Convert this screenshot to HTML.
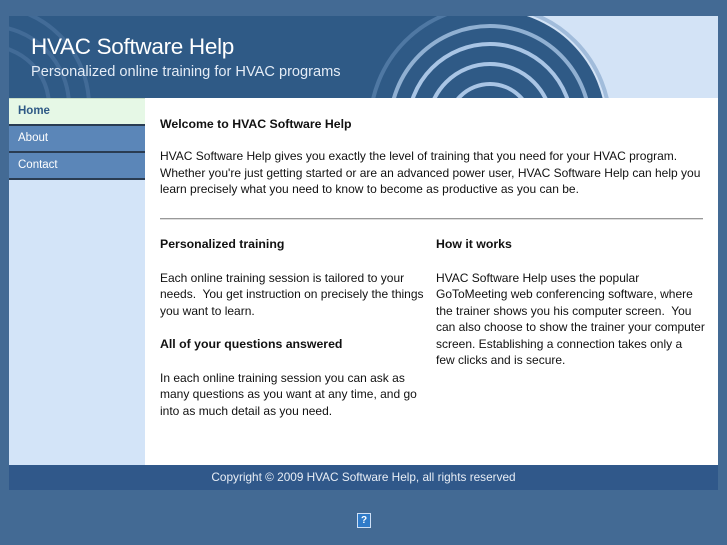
<!DOCTYPE html><html><head><style>
body{margin:0;width:727px;height:545px;background:#436a94;font-family:"Liberation Sans",sans-serif;position:relative;overflow:hidden}
#wrap{position:absolute;left:9px;top:16px;width:709px}
#hdr{position:relative;height:82px;background:#2f5a86;overflow:hidden}
#hdr h1{position:absolute;left:22px;top:18px;margin:0;font-weight:normal;font-size:22.5px;color:#fff;letter-spacing:-0.3px}
#hdr p{position:absolute;left:22px;top:48px;margin:0;font-size:14.6px;color:#e4ecf6}
#body{position:relative;height:367px;background:#fff}
#side{position:absolute;left:0;top:0;width:136px;height:367px;background:#d3e4f8}
.nav{height:25px;line-height:25px;padding-left:9px;font-size:11.5px;color:#fff;background:#5b86b8;border-bottom:2px solid #2a3c52}
.nav.on{background:#e6f8e6;color:#2f5a86;font-weight:bold;border-top:1px solid #c8ddc8}
#main{position:absolute;left:151px;top:1px;width:545px;font-size:12px;color:#111;line-height:16.5px;white-space:nowrap}
h3{font-size:12.3px;margin:0}
#foot{height:25px;line-height:25px;background:#30588a;color:#e8eef6;text-align:center;font-size:11.8px}
</style></head><body>
<div id="wrap">
<div id="hdr">
<svg width="709" height="82" style="position:absolute;left:0;top:0">
<rect x="0" y="0" width="709" height="82" fill="#d3e3f6"/>
<rect x="0" y="0" width="480" height="82" fill="#2f5a86"/>
<circle cx="481" cy="110" r="116" fill="#2f5a86"/>
<g fill="none" stroke="#a9c5e5" stroke-width="4">
<circle cx="481" cy="110" r="100" opacity="0.8"/><circle cx="481" cy="110" r="82"/><circle cx="481" cy="110" r="62"/><circle cx="481" cy="110" r="42"/></g>
<circle cx="481" cy="110" r="120" fill="none" stroke="#6f95c0" stroke-width="4" opacity="0.5"/>
<g fill="none" stroke="#4f77a3" stroke-width="4" opacity="0.6"><circle cx="-20" cy="90" r="60"/><circle cx="-20" cy="90" r="80"/><circle cx="-20" cy="90" r="100"/></g>
</svg>
<h1>HVAC Software Help</h1>
<p>Personalized online training for HVAC programs</p>
</div>
<div id="body">
<div id="side">
<div class="nav on">Home</div>
<div class="nav">About</div>
<div class="nav">Contact</div>
</div>
<div id="main">
<h3 style="position:absolute;top:17px">Welcome to HVAC Software Help</h3>
<div style="position:absolute;top:49px;width:545px">HVAC Software Help gives you exactly the level of training that you need for your HVAC program.<br>Whether you're just getting started or are an advanced power user, HVAC Software Help can help you<br>learn precisely what you need to know to become as productive as you can be.</div>
<div style="position:absolute;top:119px;width:543px;height:1px;background:#999;border-bottom:1px solid #ddd"></div>
<div style="position:absolute;top:137px;width:272px">
<h3>Personalized training</h3><div style="margin-top:17px">Each online training session is tailored to your<br>needs.&nbsp; You get instruction on precisely the things<br>you want to learn.</div>
<h3 style="margin-top:17px">All of your questions answered</h3><div style="margin-top:17px">In each online training session you can ask as<br>many questions as you want at any time, and go<br>into as much detail as you need.</div>
</div>
<div style="position:absolute;top:137px;left:276px;width:270px">
<h3>How it works</h3><div style="margin-top:17px">HVAC Software Help uses the popular<br>GoToMeeting web conferencing software, where<br>the trainer shows you his computer screen.&nbsp; You<br>can also choose to show the trainer your computer<br>screen. Establishing a connection takes only a<br>few clicks and is secure.</div>
</div>
</div>
</div>
<div id="foot">Copyright © 2009 HVAC Software Help, all rights reserved</div>
</div>
<div style="position:absolute;left:357px;top:513px;width:12px;height:13px;background:#2f7bc9;border:1px solid #cfe0f5;color:#fff;font-size:10px;line-height:13px;text-align:center;font-weight:bold">?</div>
</body></html>
